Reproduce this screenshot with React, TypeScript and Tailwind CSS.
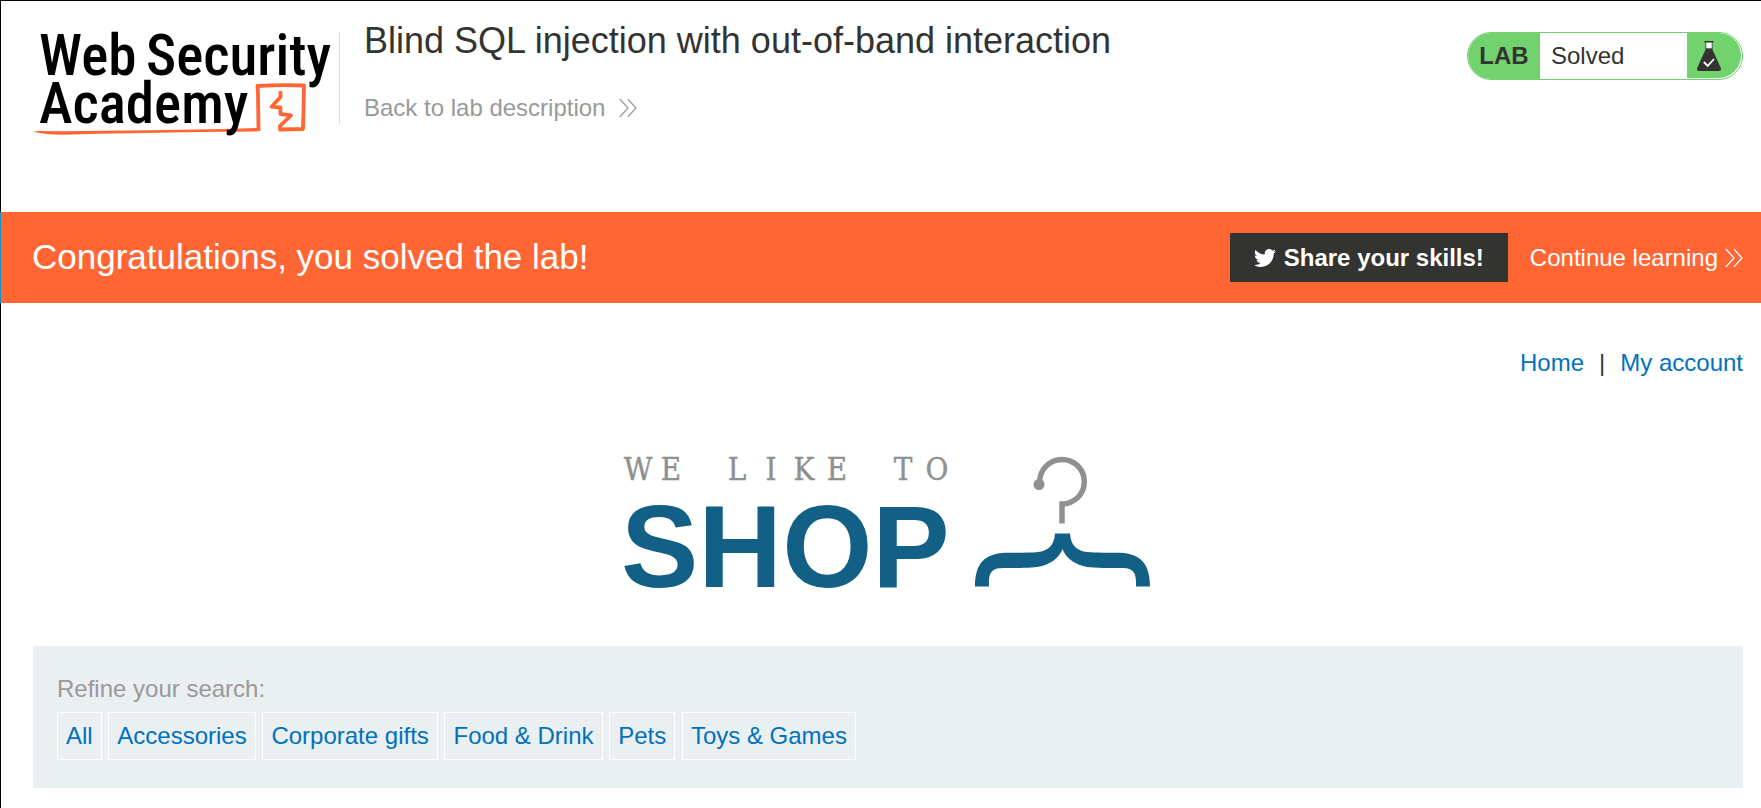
import { FaTwitter } from "react-icons/fa";

const categories = ["All", "Accessories", "Corporate gifts", "Food & Drink", "Pets", "Toys & Games"];

function AcademyLogo() {
  return (
    <svg viewBox="33 30 302 110" className="h-[110px] w-[302px] overflow-visible" role="img" aria-label="Web Security Academy">
      <path d="M34 132Q33 131 40 131L62 131.200L150 130.200L225 129L257.500 128V131.500L200 132L100 133.800L62 134.800Q45 134.500 34 132Z" fill="#ff6633" />
      <path d="M258.500 131L258 95L257.500 86Q280 84.500 304 85.500L303.500 110L303 129L280 129.500V126L291 115.300L280.500 114V107.500L271.500 106.700L280.500 97V91" fill="none" stroke="#ff6633" strokeWidth="3.800" strokeLinejoin="round" />
      <g fill="#000" fontSize="57" fontWeight="500" style={{ fontFamily: '"Roboto Condensed",Roboto,sans-serif' }}>
        <text x="39" y="75">Web</text>
        <text x="146" y="75">Security</text>
        <text x="39" y="123">Academy</text>
      </g>
    </svg>
  );
}

function Chevrons() {
  return (
    <svg viewBox="0 0 18 20" className="h-5 w-[18px]" fill="none" stroke="currentColor" strokeWidth="1.200" aria-hidden="true">
      <path d="M.8 1L9 10L.8 19M8.800 1L17 10L8.800 19" />
    </svg>
  );
}

function Flask() {
  return (
    <svg viewBox="0 0 24 30" className="h-[30px] w-6" aria-hidden="true">
      <path d="M8.800 1V8H15.200V1Z" fill="#fff" stroke="#333332" strokeWidth=".8" />
      <path d="M7.300 0H16.700V1.300H7.300Z" fill="#333332" />
      <path d="M9 7.500H15L23.800 27Q24.500 30 22 30H2Q-.5 30 .2 27Z" fill="#333332" />
      <path d="M6.800 21L10.700 25L17 18" fill="none" stroke="#fff" strokeWidth="1.800" />
    </svg>
  );
}

function ShopLogo() {
  return (
    <svg viewBox="620 450 536 145" className="h-[145px] w-[536px] overflow-visible" role="img" aria-label="We like to shop">
      <text
        x="638 671 704 737 771 804 837 870 903 937"
        y="480"
        textAnchor="middle"
        fontSize="31"
        fill="#8f9091"
        stroke="#8f9091"
        strokeWidth=".4"
        style={{ fontFamily: '"DejaVu Serif Condensed","DejaVu Serif",serif' }}
      >
        WE LIKE TO
      </text>
      <text x="621" y="587" fontSize="116" fontWeight="700" fill="#126085" style={{ fontFamily: '"Liberation Sans",sans-serif' }}>
        SHOP
      </text>
      <path d="M1039.700 482A22.300 22.300 0 1 1 1062 504V523.500" fill="none" stroke="#8f9091" strokeWidth="5.500" />
      <circle cx="1039" cy="484.500" r="5.500" fill="#8f9091" />
      <path
        d="M1055 533.500H1070C1070.500 545 1077 551 1087 552C1096 553 1110 552.500 1120 552.800C1140 554 1150 563 1150 586.500H1136C1136.500 571 1133 568 1120 568C1105 568 1090 568 1083 566C1072 563 1065 556 1062.500 549C1060 556 1053 563 1042 566C1035 568 1020 568 1005 568C992 568 988.500 571 989 586.500H975C975 563 985 554 1005 552.800C1015 552.500 1029 553 1038 552C1048 551 1054.500 545 1055 533.500Z"
        fill="#126085"
      />
    </svg>
  );
}

export default function App() {
  return (
    <div className="min-h-screen border-t border-l border-black bg-white font-['Liberation_Sans',Arial,sans-serif] text-2xl leading-7 text-[#333332]">
      <header className="flex items-start pt-[18px] pr-[18px] pb-[72px] pl-8">
        <div className="mt-[11px] flex shrink-0 items-start gap-1">
          <AcademyLogo />
          <div className="mt-0.5 h-[92px] w-px bg-[#dddddd]" />
        </div>
        <div className="ml-6 grow">
          <h1 className="text-4xl leading-[44px]">Blind SQL injection with out-of-band interaction</h1>
          <a href="#lab" className="mt-[31px] inline-flex items-center gap-3.5 text-[#999999]">
            Back to lab description
            <Chevrons />
          </a>
        </div>
        <div className="mt-[13px] flex h-12 shrink-0 overflow-hidden rounded-3xl border border-[#72d26e]">
          <strong className="flex w-[72px] items-center justify-center bg-[#72d26e]">LAB</strong>
          <span className="flex w-[147px] items-center pl-[11px]">Solved</span>
          <span className="mr-px mb-px flex w-[54px] items-center rounded-r-3xl bg-[#72d26e] pl-2.5">
            <Flask />
          </span>
        </div>
      </header>

      <section className="-ml-px flex items-center border-l border-[#0f94c8] bg-[#ff6633] py-[21px] pr-[18px] pl-[31px] text-white">
        <h2 className="grow pb-0.5 text-[35px] leading-9">Congratulations, you solved the lab!</h2>
        <button type="button" className="flex h-[49px] items-center gap-2 bg-[#333332] px-6 font-bold">
          <FaTwitter className="size-[22px]" />
          Share your skills!
        </button>
        <a href="#next" className="ml-[22px] flex items-center gap-[7px]">
          Continue learning
          <Chevrons />
        </a>
      </section>

      <main className="pr-[18px] pl-8">
        <nav className="flex justify-end gap-[15px] pt-[46px]">
          <a href="#home" className="text-[#0071bd]">Home</a>
          <span>|</span>
          <a href="#account" className="text-[#0071bd]">My account</a>
        </nav>
        <div className="flex justify-center pt-[73px]">
          <ShopLogo />
        </div>
        <section className="mt-[51px] bg-[#eaeff2] px-6 pt-[29px] pb-7">
          <p className="text-[#999999]">Refine your search:</p>
          <div className="mt-[9px]">
            {categories.map((name) => (
              <span key={name}>
                <a href="#filter" className="inline-flex h-12 items-center border border-white px-2 align-top text-[#0071bd]">
                  {name}
                </a>{" "}
              </span>
            ))}
          </div>
        </section>
      </main>
    </div>
  );
}
